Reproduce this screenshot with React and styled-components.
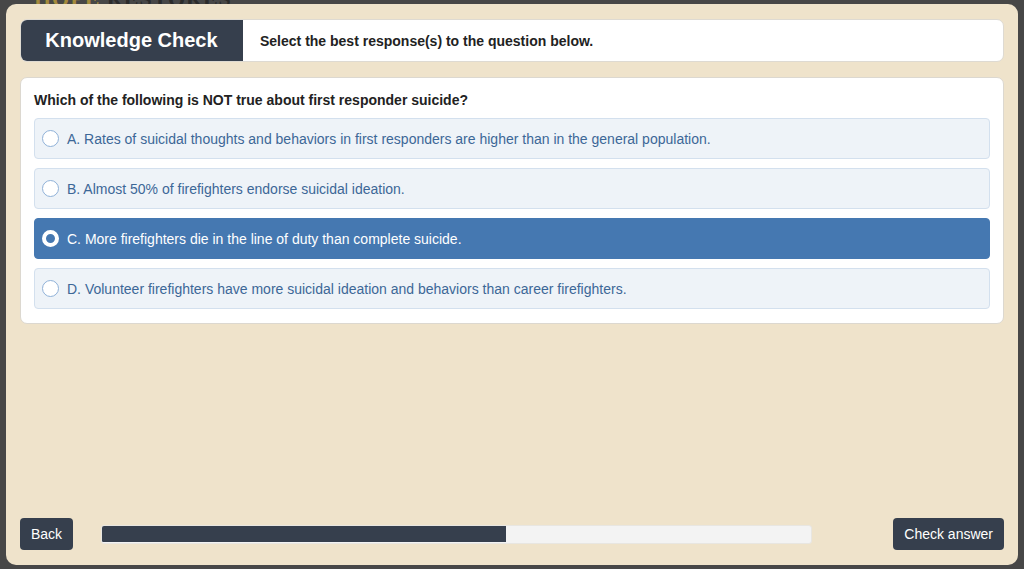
import React, { useState } from "react";
import styled, { createGlobalStyle } from "styled-components";

const Global = createGlobalStyle`
  html, body { margin: 0; padding: 0; background: #474747; }
  body { font-family: "Liberation Sans", Arial, sans-serif; }
  * { box-sizing: border-box; }
`;

const Screen = styled.div`
  position: relative;
  height: 569px;
  padding: 4px 6px 4px 6px;
  background: #474747;
  overflow: hidden;
`;

const LogoPeek = styled.div`
  position: absolute;
  top: -14px;
  left: 34px;
  font-family: "Liberation Serif", serif;
  font-weight: bold;
  font-size: 22px;
  letter-spacing: 1px;
  color: #2b2b2b;
  z-index: 0;
  span { color: #a48a3c; }
`;

const Panel = styled.div`
  position: relative;
  z-index: 1;
  height: 100%;
  background: #efe3cb;
  border-radius: 10px;
  padding: 15px 14px 15px 14px;
  display: flex;
  flex-direction: column;
`;

const Header = styled.div`
  display: flex;
  height: 43px;
  background: #ffffff;
  border-radius: 7px;
  border: 1px solid #dedad2;
  overflow: hidden;
`;

const HeaderLabel = styled.div`
  width: 223px;
  margin: -1px 0 -1px -1px;
  background: #363f4d;
  color: #ffffff;
  font-size: 20px;
  font-weight: bold;
  display: flex;
  align-items: center;
  justify-content: center;
`;

const HeaderText = styled.div`
  display: flex;
  align-items: center;
  padding-left: 17px;
  font-size: 14px;
  font-weight: bold;
  color: #222222;
`;

const Card = styled.div`
  margin-top: 15px;
  background: #ffffff;
  border: 1px solid #dcd8d0;
  border-radius: 7px;
  padding: 13px 13px 14px 13px;
  display: flex;
  flex-direction: column;
  gap: 9px;
`;

const Question = styled.div`
  font-size: 14px;
  font-weight: bold;
  color: #222222;
  line-height: 18px;
`;

const Option = styled.label`
  display: flex;
  align-items: center;
  height: 41px;
  padding-left: 7px;
  border-radius: 4px;
  border: 1px solid ${(p) => (p.$selected ? "#4578b1" : "#d3e0ee")};
  background: ${(p) => (p.$selected ? "#4578b1" : "#eef3f8")};
  color: ${(p) => (p.$selected ? "#ffffff" : "#3c6797")};
  font-size: 14px;
  cursor: pointer;
`;

const Radio = styled.span`
  width: 17px;
  height: 17px;
  border-radius: 50%;
  flex-shrink: 0;
  margin-right: 8px;
  background: ${(p) => (p.$selected ? "#4578b1" : "#ffffff")};
  border: ${(p) => (p.$selected ? "4px solid #ffffff" : "1px solid #8fb1d8")};
`;

const Footer = styled.div`
  margin-top: auto;
  display: flex;
  align-items: center;
  height: 32px;
`;

const Button = styled.button`
  height: 32px;
  padding: 0 11px;
  border: none;
  border-radius: 4px;
  background: #363f4d;
  color: #ffffff;
  font-family: "Liberation Sans", Arial, sans-serif;
  font-size: 14px;
  cursor: pointer;
`;

const Progress = styled.div`
  flex: 1;
  height: 19px;
  margin: 0 81px 0 28px;
  background: #f3f3f3;
  border: 1px solid #e8e6e1;
  border-radius: 3px;
  overflow: hidden;
  display: flex;
`;

const ProgressFill = styled.div`
  height: 100%;
  margin: -1px 0 -1px -1px;
  background: #363f4d;
  border-radius: 3px 0 0 3px;
`;

const options = [
  "A. Rates of suicidal thoughts and behaviors in first responders are higher than in the general population.",
  "B. Almost 50% of firefighters endorse suicidal ideation.",
  "C. More firefighters die in the line of duty than complete suicide.",
  "D. Volunteer firefighters have more suicidal ideation and behaviors than career firefighters.",
];

export default function App() {
  const [selected, setSelected] = useState(2);
  const progress = 4 / 7;
  return (
    <>
      <Global />
      <Screen>
        <LogoPeek>
          <span>HOPE</span> RESTORES
        </LogoPeek>
        <Panel>
          <Header>
            <HeaderLabel>Knowledge Check</HeaderLabel>
            <HeaderText>Select the best response(s) to the question below.</HeaderText>
          </Header>
          <Card>
            <Question>Which of the following is NOT true about first responder suicide?</Question>
            {options.map((o, i) => (
              <Option key={i} $selected={selected === i} onClick={() => setSelected(i)}>
                <Radio $selected={selected === i} />
                {o}
              </Option>
            ))}
          </Card>
          <Footer>
            <Button>Back</Button>
            <Progress>
              <ProgressFill style={{ width: `${progress * 100}%` }} />
            </Progress>
            <Button>Check answer</Button>
          </Footer>
        </Panel>
      </Screen>
    </>
  );
}
